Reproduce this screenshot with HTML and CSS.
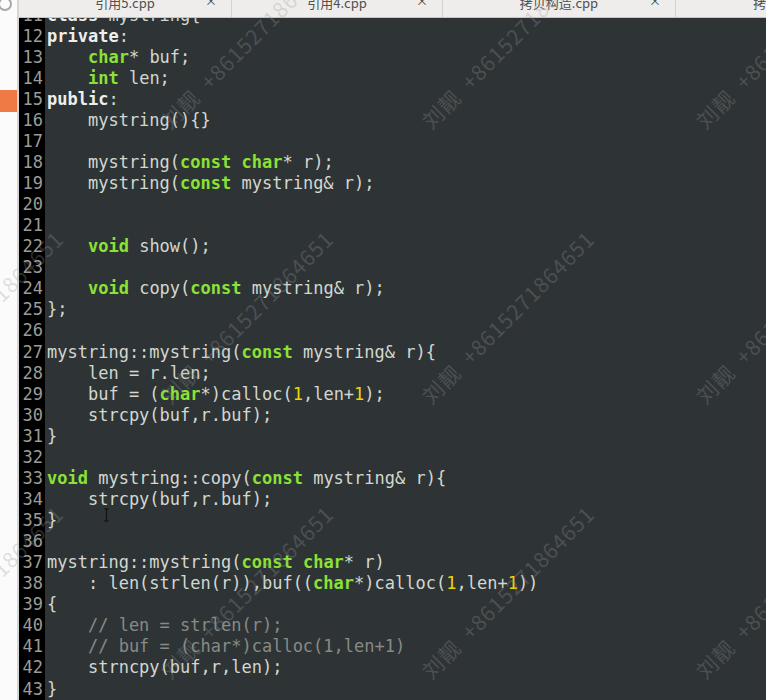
FILE: index.html
```html
<!DOCTYPE html>
<html>
<head>
<meta charset="utf-8">
<link rel="stylesheet" href="styles.css">
</head>
<body>
<div class="app">
  <aside class="side">
    <svg class="side-icon" width="16" height="18" viewBox="0 0 16 18"><circle cx="5" cy="4" r="6" fill="none" stroke="#a9a9a9" stroke-width="2"/></svg>
    <div class="side-mark"></div>
  </aside>
  <div class="main">
    <nav class="tabs">
      <div class="tab t1"><span class="label">引用5.cpp</span><span class="close">×</span></div>
      <div class="tab t2"><span class="label">引用4.cpp</span><span class="close">×</span></div>
      <div class="tab t3"><span class="label">拷贝构造.cpp</span><span class="close">×</span></div>
      <div class="tab t4"><span class="label">拷贝构造.cpp</span><span class="close">×</span></div>
    </nav>
    <div class="editor">
      <div class="inner">
<pre class="gutter">11
12
13
14
15
16
17
18
19
20
21
22
23
24
25
26
27
28
29
30
31
32
33
34
35
36
37
38
39
40
41
42
43</pre>
<pre class="code"><span class="k">class</span> mystring{
<span class="k">private</span>:
    <span class="t">char</span>* buf;
    <span class="t">int</span> len;
<span class="k">public</span>:
    mystring(){}

    mystring(<span class="t">const</span> <span class="t">char</span>* r);
    mystring(<span class="t">const</span> mystring&amp; r);


    <span class="t">void</span> show();

    <span class="t">void</span> copy(<span class="t">const</span> mystring&amp; r);
};

mystring::mystring(<span class="t">const</span> mystring&amp; r){
    len = r.len;
    buf = (<span class="t">char</span>*)calloc(<span class="n">1</span>,len+<span class="n">1</span>);
    strcpy(buf,r.buf);
}

<span class="t">void</span> mystring::copy(<span class="t">const</span> mystring&amp; r){
    strcpy(buf,r.buf);
}

mystring::mystring(<span class="t">const</span> <span class="t">char</span>* r)
    : len(strlen(r)),buf((<span class="t">char</span>*)calloc(<span class="n">1</span>,len+<span class="n">1</span>))
{
<span class="c">    // len = strlen(r);</span>
<span class="c">    // buf = (char*)calloc(1,len+1)</span>
    strncpy(buf,r,len);
}</pre>
      </div>
    </div>
  </div>
</div>
<svg class="ibeam" width="7" height="14" viewBox="0 0 7 14"><path d="M1 1h2l0.5 0.5l0.5-0.5h2M3.5 1.5v11M1 13h2l0.5-0.5l0.5 0.5h2" fill="none" stroke="#111" stroke-width="1.2"/></svg>
<div class="wm-layer">
  <span class="wm" style="left:172px;top:132px">刘靓 +8615271864651</span>
  <span class="wm" style="left:433px;top:132px">刘靓 +8615271864651</span>
  <span class="wm" style="left:707px;top:132px">刘靓 +8615271864651</span>
  <span class="wm" style="left:-98px;top:407px">刘靓 +8615271864651</span>
  <span class="wm" style="left:172px;top:407px">刘靓 +8615271864651</span>
  <span class="wm" style="left:433px;top:407px">刘靓 +8615271864651</span>
  <span class="wm" style="left:707px;top:407px">刘靓 +8615271864651</span>
  <span class="wm" style="left:-98px;top:682px">刘靓 +8615271864651</span>
  <span class="wm" style="left:172px;top:682px">刘靓 +8615271864651</span>
  <span class="wm" style="left:433px;top:682px">刘靓 +8615271864651</span>
  <span class="wm" style="left:707px;top:682px">刘靓 +8615271864651</span>
</div>
</body>
</html>
```
FILE: styles.css
```css
html, body {
  margin: 0;
  padding: 0;
  width: 766px;
  height: 700px;
  overflow: hidden;
  background: #2e3436;
}
.app {
  display: flex;
  width: 766px;
  height: 700px;
}
.side {
  width: 17px;
  flex: none;
  background: #fbfbfb;
  border-right: 2px solid #d4d4d4;
  display: flex;
  flex-direction: column;
}
.side-icon {
  display: block;
}
.side-mark {
  margin-top: 72px;
  height: 22px;
  background: #ef7a46;
}
.main {
  flex: 1;
  display: flex;
  flex-direction: column;
  min-width: 0;
}
.tabs {
  height: 17px;
  flex: none;
  display: flex;
  background: #eeedec;
  border-bottom: 1px solid #c4c4c4;
  overflow: hidden;
  font-family: "Noto Sans CJK SC", "Noto Sans", sans-serif;
  font-size: 13px;
  color: #505050;
}
.tab {
  flex: none;
  display: grid;
  grid-template-columns: 40px 1fr 40px;
  align-items: start;
  border-right: 1px solid #d2d2d2;
  box-sizing: border-box;
}
.t1 { width: 213px; }
.t2 { width: 211px; }
.t3 { width: 233px; }
.t4 { width: 234px; }
.label {
  grid-column: 2;
  justify-self: center;
  line-height: 13px;
  margin-top: -4px;
  white-space: nowrap;
}
.close {
  grid-column: 3;
  justify-self: center;
  font-size: 12px;
  line-height: 12px;
  margin-top: -5px;
  color: #444;
}
.editor {
  flex: 1;
  overflow: hidden;
  background: #2e3436;
}
.inner {
  display: flex;
  margin-top: -13.5px;
}
.gutter, .code {
  margin: 0;
  font-family: "DejaVu Sans Mono", monospace;
  font-size: 17px;
  line-height: 21.07px;
}
.gutter {
  width: 26px;
  flex: none;
  box-sizing: border-box;
  padding-right: 2px;
  background: #000;
  color: #9a9c98;
  text-align: right;
  min-height: 800px;
}
.code {
  padding-left: 2px;
  color: #d3d7cf;
}
.k { color: #eeeeec; font-weight: bold; }
.t { color: #8ae234; font-weight: bold; }
.n { color: #edd400; }
.c { color: #888a85; }
.ibeam {
  position: absolute;
  left: 103px;
  top: 508px;
}
.wm-layer {
  position: absolute;
  left: 0;
  top: 0;
  width: 766px;
  height: 700px;
  overflow: hidden;
  pointer-events: none;
}
.wm {
  position: absolute;
  font-family: "Noto Sans CJK SC", "Noto Sans", sans-serif;
  font-size: 21px;
  line-height: 21px;
  letter-spacing: 1px;
  white-space: nowrap;
  color: rgba(150, 150, 150, 0.3);
  transform-origin: 0 100%;
  transform: translateY(-21px) rotate(-45deg);
  word-spacing: 6px;
}
```
